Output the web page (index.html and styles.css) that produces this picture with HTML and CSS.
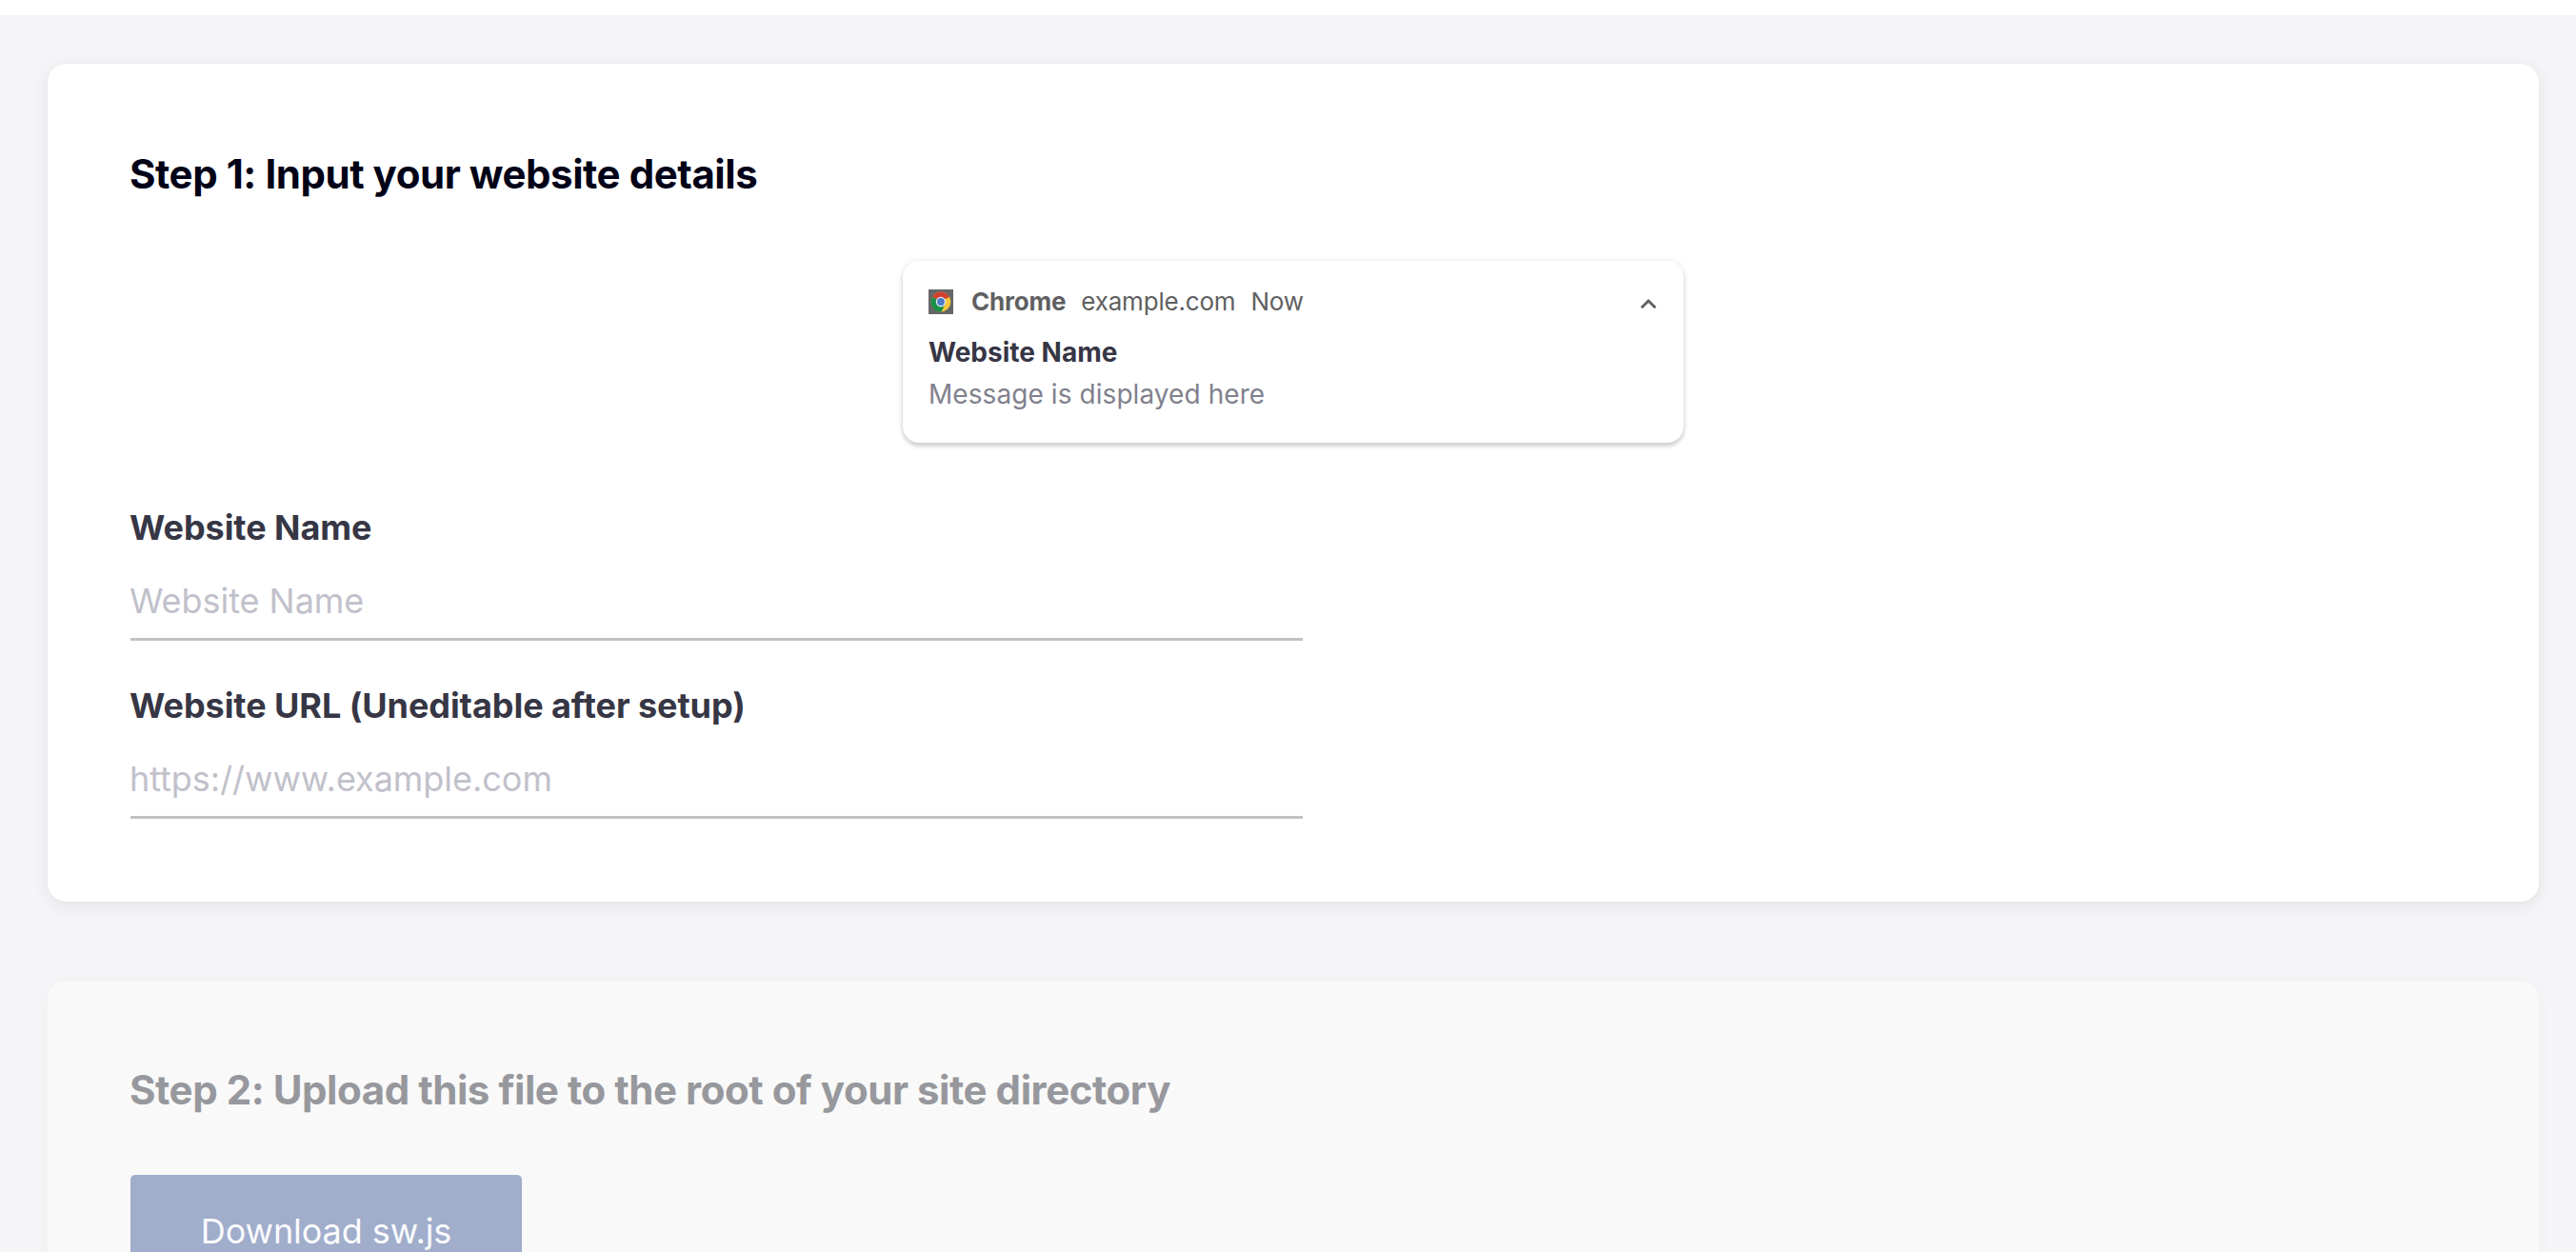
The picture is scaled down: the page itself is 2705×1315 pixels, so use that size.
FILE: index.html
```html
<!DOCTYPE html>
<html lang="en">
<head>
    <meta charset="UTF-8">
    <title>Website Setup</title>
    <link rel="stylesheet" href="styles.css">
</head>
<body>
    <div class="topbar"></div>
    <main class="steps">
        <section class="card">
            <h2 class="card-title">Step 1: Input your website details</h2>

            <div class="notification">
                <div class="notification-header">
                    <svg class="chrome-icon" viewBox="0 0 26 26">
                        <rect width="26" height="26" fill="#656667"/>
                        <circle cx="13" cy="13" r="10.4" fill="#f8c63a"/>
                        <path d="M13 13 L4 7.8 A10.4 10.4 0 0 1 22 7.8 Z" fill="#d0402f"/>
                        <path d="M4 7.8 A10.4 10.4 0 0 0 13.6 23.4 L17.4 15.5 L13 13 Z" fill="#1a8f49"/>
                        <circle cx="13" cy="13" r="5.2" fill="#e9eef5"/>
                        <circle cx="13" cy="13" r="3.9" fill="#4a7cc9"/>
                    </svg>
                    <span class="app">Chrome</span>
                    <span class="domain">example.com</span>
                    <span class="time">Now</span>
                    <svg class="chevron" viewBox="0 0 18 12">
                        <path d="M1.7 10.3 L9 3 L16.3 10.3" fill="none" stroke="#5f6061" stroke-width="2.8"/>
                    </svg>
                </div>
                <div class="notification-name">Website Name</div>
                <div class="notification-message">Message is displayed here</div>
            </div>

            <form class="details">
                <div class="field">
                    <label for="name">Website Name</label>
                    <input type="text" id="name" placeholder="Website Name">
                </div>
                <div class="field">
                    <label for="url">Website URL (Uneditable after setup)</label>
                    <input type="text" id="url" placeholder="https://www.example.com">
                </div>
            </form>
        </section>

        <section class="card disabled">
            <h2 class="card-title">Step 2: Upload this file to the root of your site directory</h2>
            <button type="button" class="download" disabled>Download sw.js</button>
        </section>
    </main>
</body>
</html>
```
FILE: styles.css
```css
* {
    box-sizing: border-box;
}
body {
    margin: 0;
    height: 1315px;
    overflow: hidden;
    background: #f5f5f8;
    font-family: Inter, sans-serif;
    color: #363645;
}
.topbar {
    height: 16px;
    background: #fff;
}
.steps {
    display: flex;
    flex-direction: column;
    gap: 83px;
    padding: 51px 39px 0 50px;
}
.card {
    padding: 86px 87px 87px;
    background: #fff;
    border-radius: 20px;
    box-shadow: 0 4px 18px rgba(0, 0, 0, 0.08);
}
.card-title {
    margin: 0;
    font-size: 42px;
    line-height: 60px;
    font-weight: 700;
    letter-spacing: -0.45px;
    text-indent: -1px;
    color: #020217;
}

/* notification preview */
.notification {
    width: 820px;
    height: 191px;
    margin: 61px auto 0;
    padding: 27px 27px 33px;
    border-radius: 17px;
    background: #fff;
    box-shadow: 0 4px 4px rgba(0, 0, 0, 0.15), 0 0 6px rgba(0, 0, 0, 0.1);
}
.notification-header {
    display: flex;
    align-items: center;
    height: 32px;
    font-size: 26px;
    line-height: 32px;
    color: #5f6061;
}
.chrome-icon {
    width: 26px;
    height: 26px;
    margin-right: 19px;
}
.app {
    font-weight: 700;
    letter-spacing: -0.2px;
}
.domain, .time {
    margin-left: 16px;
    letter-spacing: -0.2px;
}
.chevron {
    width: 18px;
    height: 12px;
    margin: 3px 1px 0 auto;
}
.notification-name {
    margin-top: 19px;
    font-size: 28px;
    line-height: 36px;
    font-weight: 700;
}
.notification-message {
    margin-top: 8px;
    font-size: 28px;
    line-height: 36px;
    letter-spacing: 0.07px;
    color: #81818d;
}

/* form */
.details {
    display: flex;
    flex-direction: column;
    gap: 46px;
    width: 1231px;
    margin-top: 67px;
}
.field label {
    display: block;
    font-size: 36px;
    line-height: 44px;
    font-weight: 700;
    letter-spacing: -0.05px;
    text-indent: -1px;
}
.field input {
    display: block;
    width: 100%;
    height: 97px;
    padding: 33px 0 17px;
    border: none;
    border-bottom: 3px solid #c2c2c4;
    background: none;
    font-family: inherit;
    font-size: 36px;
    line-height: 44px;
    letter-spacing: -0.04px;
    text-indent: -1px;
}
.field input::placeholder {
    color: #c1c1cb;
}

/* step that is not available yet */
.disabled {
    padding-top: 85px;
    background: #f9f9f9;
    box-shadow: 0 4px 18px rgba(0, 0, 0, 0.03);
}
.disabled .card-title {
    color: #97989d;
}
.download {
    display: block;
    width: 411px;
    height: 118px;
    margin-top: 59px;
    border: none;
    border-radius: 5px;
    background: #a0adcb;
    color: #fafbfd;
    font-family: inherit;
    font-size: 36px;
    letter-spacing: -0.08px;
}
```
